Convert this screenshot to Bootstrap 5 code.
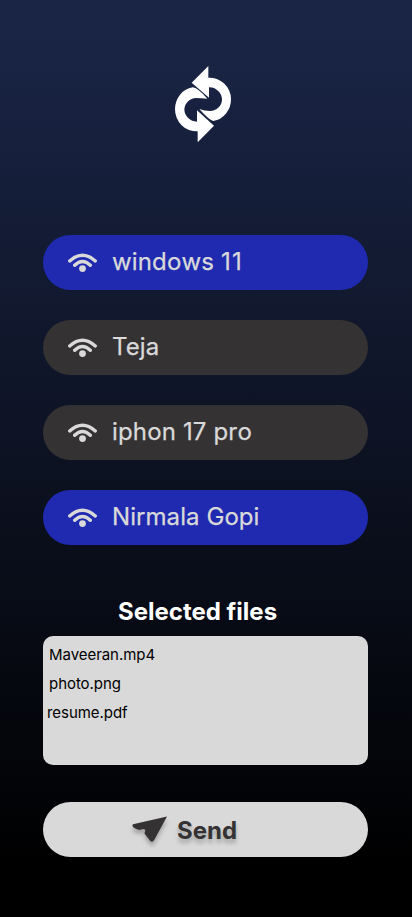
<!DOCTYPE html>
<html lang="en">
<head>
<meta charset="utf-8">
<meta name="viewport" content="width=device-width, initial-scale=1">
<title>Send files</title>
<link href="https://cdn.jsdelivr.net/npm/bootstrap@5.3.0/dist/css/bootstrap.min.css" rel="stylesheet">
<style>
body { font-family: Inter, "Liberation Sans", sans-serif; background: #000; }
.screen { width: 412px; height: 917px; padding: 55px 44px 0 43px; background: linear-gradient(180deg, #1a2546 3%, #000 95%); }
.logo { width: 90px; height: 100px; margin: 0 auto 80px 117px; }
.devices { gap: 30px; }
.pill { height: 55px; border: 0; border-radius: 28px; font-size: 24px; line-height: 29px; color: #d9d9d9; }
.device { padding: 0 25px 2px; gap: 15px; background: #353233; letter-spacing: .07px; -webkit-text-stroke: .25px #d9d9d9; }
.device .numeric { font-kerning: none; letter-spacing: .15px; }
.device .digits { letter-spacing: 1.2px; }
.device.on { background: #1f2ab1; }
.device svg { width: 29px; height: 19px; margin-top: 2px; }
.heading { margin: 52px 0 10px 75px; font-size: 24px; line-height: 29px; }
.files { height: 129px; margin-bottom: 37px; padding: 9px 6px; border-radius: 10px; background: #d9d9d9; color: #000; font-size: 15px; line-height: 19px; letter-spacing: -.05px; gap: 10px; }
.shifted { margin-left: -2px; }
.send { padding: 2px 0 0 89px; gap: 9px; background: #d9d9d9; color: #353233; }
.send svg { width: 36px; height: 26px; margin-top: -4px; overflow: visible; filter: drop-shadow(0 4px 2px rgba(0,0,0,.25)); }
.send span { text-shadow: 0 4px 4px rgba(0,0,0,.25); }
</style>
</head>
<body>
<svg class="d-none" xmlns="http://www.w3.org/2000/svg">
  <symbol id="wifi" viewBox="0 0 29 19">
    <path d="M1.7 7.9Q14.5-3.6 27.3 7.9M6.7 12.3Q14.5 4.6 22.3 12.3" fill="none" stroke="currentColor" stroke-width="3.4" stroke-linecap="round"/>
    <circle cx="14.5" cy="15.6" r="3.4" fill="currentColor"/>
  </symbol>
</svg>
<main class="screen d-flex flex-column">
  <svg class="logo flex-shrink-0" viewBox="0 0 270 300" fill="#fff" aria-label="Transfer">
    <path d="M95 83L145 33V68A65 65 0 0 1 213 132A62 66 0 0 1 160 198Q147 195 118 162Q134 168 150 168A36 35 0 0 0 186 133A38 38 0 0 0 147 97V128Z"/>
    <path d="M162 212L113 262V229A65 66 0 0 1 45 162A62 66 0 0 1 98 97Q113 98 142 131Q122 129 108 129A36 36 0 0 0 73 163A38 38 0 0 0 111 200V166Z"/>
  </svg>
  <div class="devices d-flex flex-column">
    <button class="pill device on d-flex align-items-center"><svg><use href="#wifi"/></svg><span class="numeric">windows <span class="digits">11</span></span></button>
    <button class="pill device d-flex align-items-center"><svg><use href="#wifi"/></svg><span>Teja</span></button>
    <button class="pill device d-flex align-items-center"><svg><use href="#wifi"/></svg><span class="numeric">iphon 17 pro</span></button>
    <button class="pill device on d-flex align-items-center"><svg><use href="#wifi"/></svg><span>Nirmala Gopi</span></button>
  </div>
  <h1 class="heading fw-bold text-white">Selected files</h1>
  <div class="files d-flex flex-column">
    <div>Maveeran.mp4</div>
    <div>photo.png</div>
    <div class="shifted">resume.pdf</div>
  </div>
  <button class="pill send d-flex align-items-center fw-bold">
    <svg viewBox="0 0 36 26" fill="currentColor"><path d="M1 8.3L35 .6L22.2 24Q20.3 27 18.1 24.7L13 18.3Q12.1 17 13 15.9Q14 13.3 11.5 13L7 13.9Q5.5 13.8 2.2 12Q-.6 10 1 8.3Z"/></svg>
    <span>Send</span>
  </button>
</main>
<script src="https://cdn.jsdelivr.net/npm/bootstrap@5.3.0/dist/js/bootstrap.bundle.min.js"></script>
</body>
</html>
